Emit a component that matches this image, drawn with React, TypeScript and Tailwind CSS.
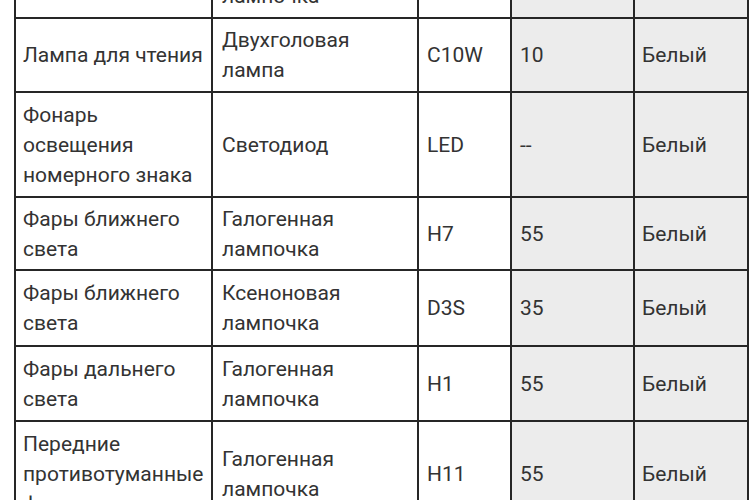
import React from 'react';

type Row = {
  place: string[];
  lamp: string[];
  type: string;
  watt: string;
  color: string;
};

// first row is mostly scrolled out of view above the window
const rows: Row[] = [
  { place: ['Фонарь заднего хода'], lamp: ['Галогенная', 'лампочка'], type: 'W16W', watt: '16', color: 'Белый' },
  { place: ['Лампа для чтения'], lamp: ['Двухголовая', 'лампа'], type: 'C10W', watt: '10', color: 'Белый' },
  { place: ['Фонарь', 'освещения', 'номерного знака'], lamp: ['Светодиод'], type: 'LED', watt: '--', color: 'Белый' },
  { place: ['Фары ближнего', 'света'], lamp: ['Галогенная', 'лампочка'], type: 'H7', watt: '55', color: 'Белый' },
  { place: ['Фары ближнего', 'света'], lamp: ['Ксеноновая', 'лампочка'], type: 'D3S', watt: '35', color: 'Белый' },
  { place: ['Фары дальнего', 'света'], lamp: ['Галогенная', 'лампочка'], type: 'H1', watt: '55', color: 'Белый' },
  { place: ['Передние', 'противотуманные', 'фары'], lamp: ['Галогенная', 'лампочка'], type: 'H11', watt: '55', color: 'Белый' },
];

const Lines = ({ lines }: { lines: string[] }) => (
  <div className="whitespace-nowrap">
    {lines.map((l, i) => (
      <div key={i}>{l}</div>
    ))}
  </div>
);

export default function App() {
  return (
    <div className="w-[750px] h-[500px] overflow-hidden bg-white">
      <div
        className="ml-[14px] -mt-[57px] w-[735px] grid grid-cols-[195px_204px_91px_121px_112px] grid-rows-[72px_72px_103px_71px_74px_73px_103px] gap-[2px] p-[2px] bg-[#262626] text-[21px] leading-[30px] text-[#333333]"
        style={{ fontFamily: 'Roboto, "Noto Sans", sans-serif' }}
      >
        {rows.map((r, i) => (
          <React.Fragment key={i}>
            <div className="bg-white flex items-center pl-[7px]">
              <Lines lines={r.place} />
            </div>
            <div className="bg-white flex items-center pl-[9px]">
              <Lines lines={r.lamp} />
            </div>
            <div className="bg-white flex items-center pl-[8px]">{r.type}</div>
            <div className="bg-[#ececec] flex items-center pl-[8px]">{r.watt}</div>
            <div className="bg-[#ececec] flex items-center pl-[7px]">{r.color}</div>
          </React.Fragment>
        ))}
      </div>
    </div>
  );
}
